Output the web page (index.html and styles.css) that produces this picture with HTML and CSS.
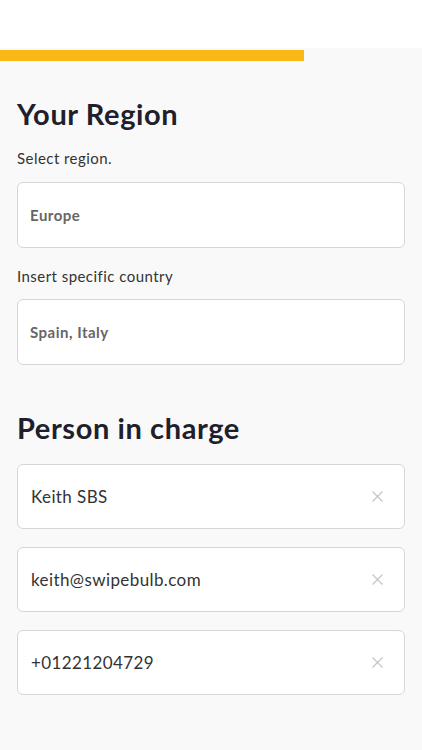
FILE: index.html
```html
<!DOCTYPE html>
<html lang="en">
<head>
<meta charset="utf-8">
<title>Your Region</title>
<link rel="stylesheet" href="styles.css">
</head>
<body>
<div class="app">
  <header class="topbar"></header>
  <main class="content">
    <div class="progress"><div class="progress-fill" style="width:304px"></div></div>
    <section class="form">
      <h1 class="title">Your Region</h1>
      <div class="label">Select region.</div>
      <div class="field select"><span class="value-bold">Europe</span></div>
      <div class="label label-2">Insert specific country</div>
      <div class="field select"><span class="value-bold">Spain, Italy</span></div>

      <h1 class="title title-2">Person in charge</h1>
      <div class="stack">
        <div class="field input"><span class="value">Keith SBS</span>
          <svg class="clear" width="11" height="11" viewBox="0 0 11 11"><path d="M0.5 0.5 L10.5 10.5 M10.5 0.5 L0.5 10.5"/></svg>
        </div>
        <div class="field input"><span class="value">keith@swipebulb.com</span>
          <svg class="clear" width="11" height="11" viewBox="0 0 11 11"><path d="M0.5 0.5 L10.5 10.5 M10.5 0.5 L0.5 10.5"/></svg>
        </div>
        <div class="field input"><span class="value">+01221204729</span>
          <svg class="clear" width="11" height="11" viewBox="0 0 11 11"><path d="M0.5 0.5 L10.5 10.5 M10.5 0.5 L0.5 10.5"/></svg>
        </div>
      </div>
    </section>
  </main>
</div>
</body>
</html>
```
FILE: styles.css
```css
* { box-sizing: border-box; }
html, body { margin: 0; padding: 0; height: 100%; }
body {
  font-family: Lato, "Noto Sans", "Liberation Sans", sans-serif;
  background: #f9f9f9;
  color: #333;
}
.app { min-height: 100%; display: flex; flex-direction: column; }
.topbar { height: 48px; background: #ffffff; flex: none; }
.content { flex: 1; background: #f9f9f9; padding-top: 2px; }
.progress { height: 11px; }
.progress-fill { height: 11px; background: #fbb618; }
.form { padding: 35px 17px 40px; display: flex; flex-direction: column; }
.title {
  margin: 0;
  font-size: 29px;
  line-height: 35px;
  font-weight: 700;
  color: #20202c;
  letter-spacing: 0.6px;
}
.title-2 { margin-top: 45px; margin-bottom: 19px; }
.label {
  margin: 17px 0 14px;
  font-size: 15px;
  line-height: 20px;
  color: #333;
  letter-spacing: 0.45px;
}
.label-2 { margin: 18px 0 13px; }
.field {
  display: flex;
  align-items: center;
  background: #ffffff;
  border: 1px solid #d6d6d6;
  border-radius: 6px;
}
.select { height: 66px; padding: 0 12px; }
.input { height: 65px; padding: 0 21px 0 13px; justify-content: space-between; }
.stack { display: flex; flex-direction: column; gap: 18px; }
.value-bold { font-size: 15px; font-weight: 700; color: #666; letter-spacing: 0.5px; }
.value { font-size: 17px; color: #333; letter-spacing: 0.4px; }
.clear { flex: none; }
.clear path { stroke: #c6c6c6; stroke-width: 1.3; fill: none; }
```
